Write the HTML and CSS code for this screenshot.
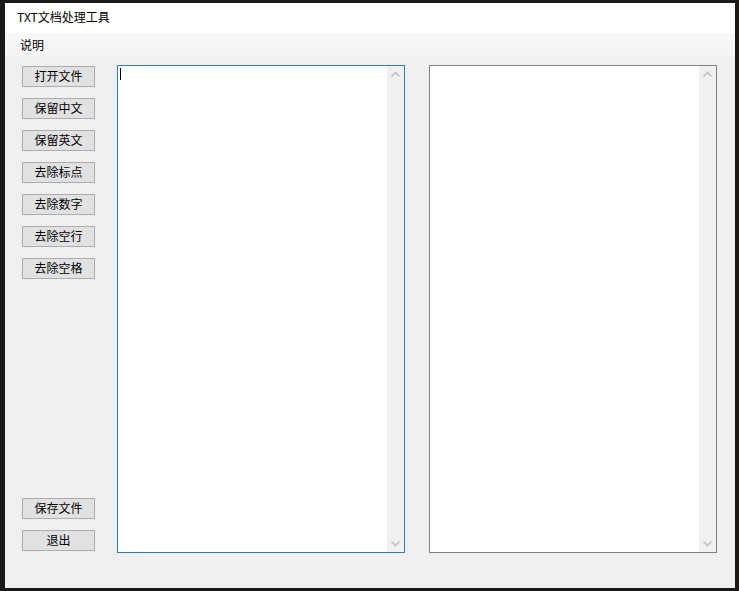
FILE: index.html
```html
<!DOCTYPE html>
<html lang="zh-CN">
<head>
<meta charset="utf-8">
<title>TXT文档处理工具</title>
<link rel="stylesheet" href="styles.css">
</head>
<body>
<div class="window">
  <div class="titlebar">TXT文档处理工具</div>
  <div class="menubar"><span class="menu-item">说明</span></div>
  <div class="content">
    <div class="buttons">
      <div class="btn">打开文件</div>
      <div class="btn">保留中文</div>
      <div class="btn">保留英文</div>
      <div class="btn">去除标点</div>
      <div class="btn">去除数字</div>
      <div class="btn">去除空行</div>
      <div class="btn">去除空格</div>
      <div class="spacer"></div>
      <div class="btn">保存文件</div>
      <div class="btn">退出</div>
    </div>
    <div class="textbox focused">
      <div class="text-area"><span class="caret"></span></div>
      <div class="scrollbar">
        <svg class="arrow" viewBox="0 0 17 17" width="17" height="17"><polyline points="4.5,10.5 8.5,6.5 12.5,10.5" fill="none" stroke="#c2c2c2" stroke-width="1.6"/></svg>
        <svg class="arrow" viewBox="0 0 17 17" width="17" height="17"><polyline points="4.5,6.5 8.5,10.5 12.5,6.5" fill="none" stroke="#c2c2c2" stroke-width="1.6"/></svg>
      </div>
    </div>
    <div class="textbox">
      <div class="text-area"></div>
      <div class="scrollbar">
        <svg class="arrow" viewBox="0 0 17 17" width="17" height="17"><polyline points="4.5,10.5 8.5,6.5 12.5,10.5" fill="none" stroke="#c2c2c2" stroke-width="1.6"/></svg>
        <svg class="arrow" viewBox="0 0 17 17" width="17" height="17"><polyline points="4.5,6.5 8.5,10.5 12.5,6.5" fill="none" stroke="#c2c2c2" stroke-width="1.6"/></svg>
      </div>
    </div>
  </div>
</div>
</body>
</html>
```
FILE: styles.css
```css
* { box-sizing: border-box; }
html, body {
  margin: 0;
  padding: 0;
  width: 739px;
  height: 591px;
  overflow: hidden;
}
body {
  background: #1b1917;
  font-family: "Noto Sans CJK SC", "Liberation Sans", sans-serif;
  font-size: 12px;
  color: #000;
}
.window {
  margin: 3px 0 0 5px;
  width: 730px;
  height: 585px;
  background: #f0f0f0;
  display: flex;
  flex-direction: column;
}
.titlebar {
  height: 30px;
  background: #ffffff;
  padding-left: 12px;
  line-height: 28px;
  font-size: 12px;
}
.menubar {
  height: 25px;
  background: linear-gradient(#f8f8f8, #f4f4f4);
  border-bottom: 1px solid #ececec;
  padding-left: 15px;
  line-height: 24px;
}
.content {
  flex: 1;
  display: flex;
  align-items: flex-start;
  gap: 24px;
  padding: 7px 0 0 17px;
}
.buttons {
  flex: none;
  width: 73px;
  height: 485px;
  margin-top: 1px;
  margin-right: -2px;
  display: flex;
  flex-direction: column;
  gap: 11px;
}
.spacer { flex: 1; margin-top: -11px; }
.btn {
  height: 21px;
  background: #e1e1e1;
  border: 1px solid #adadad;
  text-align: center;
  line-height: 18px;
  font-size: 12px;
}
.textbox {
  flex: none;
  width: 288px;
  height: 488px;
  background: #ffffff;
  border: 1px solid #828282;
  display: flex;
}
.textbox.focused { border-color: #2b7fc0; }
.text-area {
  flex: 1;
  position: relative;
}
.caret {
  position: absolute;
  left: 2px;
  top: 2px;
  width: 1px;
  height: 12px;
  background: #000;
}
.scrollbar {
  width: 17px;
  background: #f0f0f0;
  display: flex;
  flex-direction: column;
  justify-content: space-between;
}
.arrow { display: block; }
```
